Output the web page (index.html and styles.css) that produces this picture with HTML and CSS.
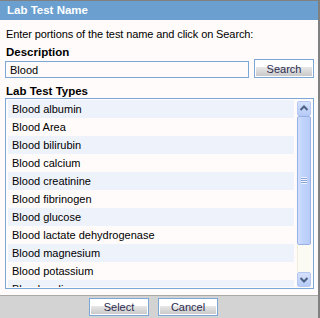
FILE: index.html
```html
<!DOCTYPE html>
<html lang="en">
<head>
    <meta charset="UTF-8">
    <title>Lab Test Name</title>
    <link rel="stylesheet" href="styles.css">
</head>
<body>

<div class="dialog">
    <div class="dialog-title">Lab Test Name</div>

    <div class="dialog-body">
        <p class="hint">Enter portions of the test name and click on Search:</p>

        <label class="field-label" for="description">Description</label>
        <div class="search-row">
            <input id="description" class="text-input" type="text" value="Blood">
            <button class="btn">Search</button>
        </div>

        <div class="field-label field-label-list">Lab Test Types</div>
        <div class="listbox">
            <ul class="list-rows">
                <li>Blood albumin</li>
                <li>Blood Area</li>
                <li>Blood bilirubin</li>
                <li>Blood calcium</li>
                <li>Blood creatinine</li>
                <li>Blood fibrinogen</li>
                <li>Blood glucose</li>
                <li>Blood lactate dehydrogenase</li>
                <li>Blood magnesium</li>
                <li>Blood potassium</li>
                <li>Blood sodium</li>
            </ul>
            <div class="scrollbar">
                <div class="sb-btn">
                    <svg width="14" height="15" viewBox="0 0 14 15"><polyline points="3.5,9 7,5.5 10.5,9" fill="none" stroke="#4d6185" stroke-width="2"/></svg>
                </div>
                <div class="sb-thumb"><span class="sb-grip"></span></div>
                <div class="sb-track"></div>
                <div class="sb-btn">
                    <svg width="14" height="15" viewBox="0 0 14 15"><polyline points="3.5,6 7,9.5 10.5,6" fill="none" stroke="#4d6185" stroke-width="2"/></svg>
                </div>
            </div>
        </div>
    </div>

    <div class="dialog-footer">
        <button class="btn btn-small">Select</button>
        <button class="btn btn-small">Cancel</button>
    </div>
</div>

</body>
</html>
```

FILE: styles.css
```css
body {
    margin: 0;
    padding: 0;
    font-family: 'Liberation Sans', Arial, sans-serif;
    font-size: 11px;
    color: #000;
    background: #fffbfa;
}

.dialog {
    width: 320px;
    height: 318px;
    box-sizing: border-box;
    border-top: 1px solid #808080;
    border-right: 2px solid #808080;
    display: flex;
    flex-direction: column;
    background: #fffbfa;
}

.dialog-title {
    height: 19px;
    line-height: 19px;
    padding-left: 7px;
    background: #6a9fd0;
    color: #fff;
    font-weight: bold;
    font-size: 11.5px;
}

.dialog-body {
    flex: 1;
    padding: 7px 4px 0 5px;
    display: flex;
    flex-direction: column;
}

.hint {
    margin: 0 0 5px 1px;
    line-height: 14px;
    letter-spacing: -0.1px;
}

.field-label {
    display: block;
    margin-left: 1px;
    font-weight: bold;
    font-size: 11.5px;
    line-height: 13px;
}

.field-label-list {
    margin-top: 7px;
}

.search-row {
    display: flex;
    align-items: flex-end;
    gap: 5px;
    height: 19px;
}

.text-input {
    width: 244px;
    height: 17px;
    box-sizing: border-box;
    border: 1px solid #7aa7d6;
    padding: 0 4px;
    margin: 0;
    background: #fffbfa;
    font-family: 'Liberation Sans', Arial, sans-serif;
    font-size: 11px;
    color: #000;
    outline: none;
}

.btn {
    width: 60px;
    height: 19px;
    box-sizing: border-box;
    margin: 0;
    padding: 0;
    border: 1px solid #7aa7d6;
    background: linear-gradient(#fff 0%, #fff 42%, #e8e8e8 42%, #c6c6c6 100%);
    box-shadow: inset 0 0 0 1px #fff;
    font-family: 'Liberation Sans', Arial, sans-serif;
    font-size: 11px;
    color: #2c2c50;
    line-height: 16px;
}

.btn-small {
    height: 18px;
}

/* Listbox */
.listbox {
    height: 191px;
    box-sizing: border-box;
    border: 1px solid #7aa7d6;
    padding: 1px;
    display: flex;
}

.list-rows {
    list-style: none;
    margin: 0 3px 0 1px;
    padding: 0;
    flex: 1;
    overflow: hidden;
}

.list-rows li {
    height: 18px;
    line-height: 18px;
    padding-left: 4px;
    white-space: nowrap;
}

.list-rows li:nth-child(odd) {
    background: #eef2fb;
}

.scrollbar {
    width: 14px;
    margin: 1px 1px 0 0;
    display: flex;
    flex-direction: column;
}

.sb-btn {
    height: 15px;
    box-sizing: border-box;
    border: 1px solid #b4c8f2;
    border-radius: 2px;
    background: linear-gradient(#d6e2fd, #b6cbf7);
}

.sb-btn svg {
    display: block;
    margin: -1px 0 0 -1px;
}

.sb-thumb {
    height: 129px;
    box-sizing: border-box;
    border: 1px solid #98b2e8;
    border-radius: 2px;
    background: linear-gradient(to right, #d2defd, #c0d3fc 40%, #b8ccf8);
    display: flex;
    align-items: center;
    justify-content: center;
}

.sb-grip {
    width: 6px;
    height: 7px;
    background: repeating-linear-gradient(#eef3ff 0 1px, #8ca6dc 1px 2px);
}

.sb-track {
    flex: 1;
    background: #fbfbf4;
    border-left: 1px solid #ededda;
}

/* Footer */
.dialog-footer {
    height: 23px;
    box-sizing: border-box;
    border-top: 1px solid #a8a8a8;
    background: #d3d3d3;
    display: flex;
    align-items: flex-start;
    gap: 9px;
    padding: 2px 0 0 89px;
}
```
